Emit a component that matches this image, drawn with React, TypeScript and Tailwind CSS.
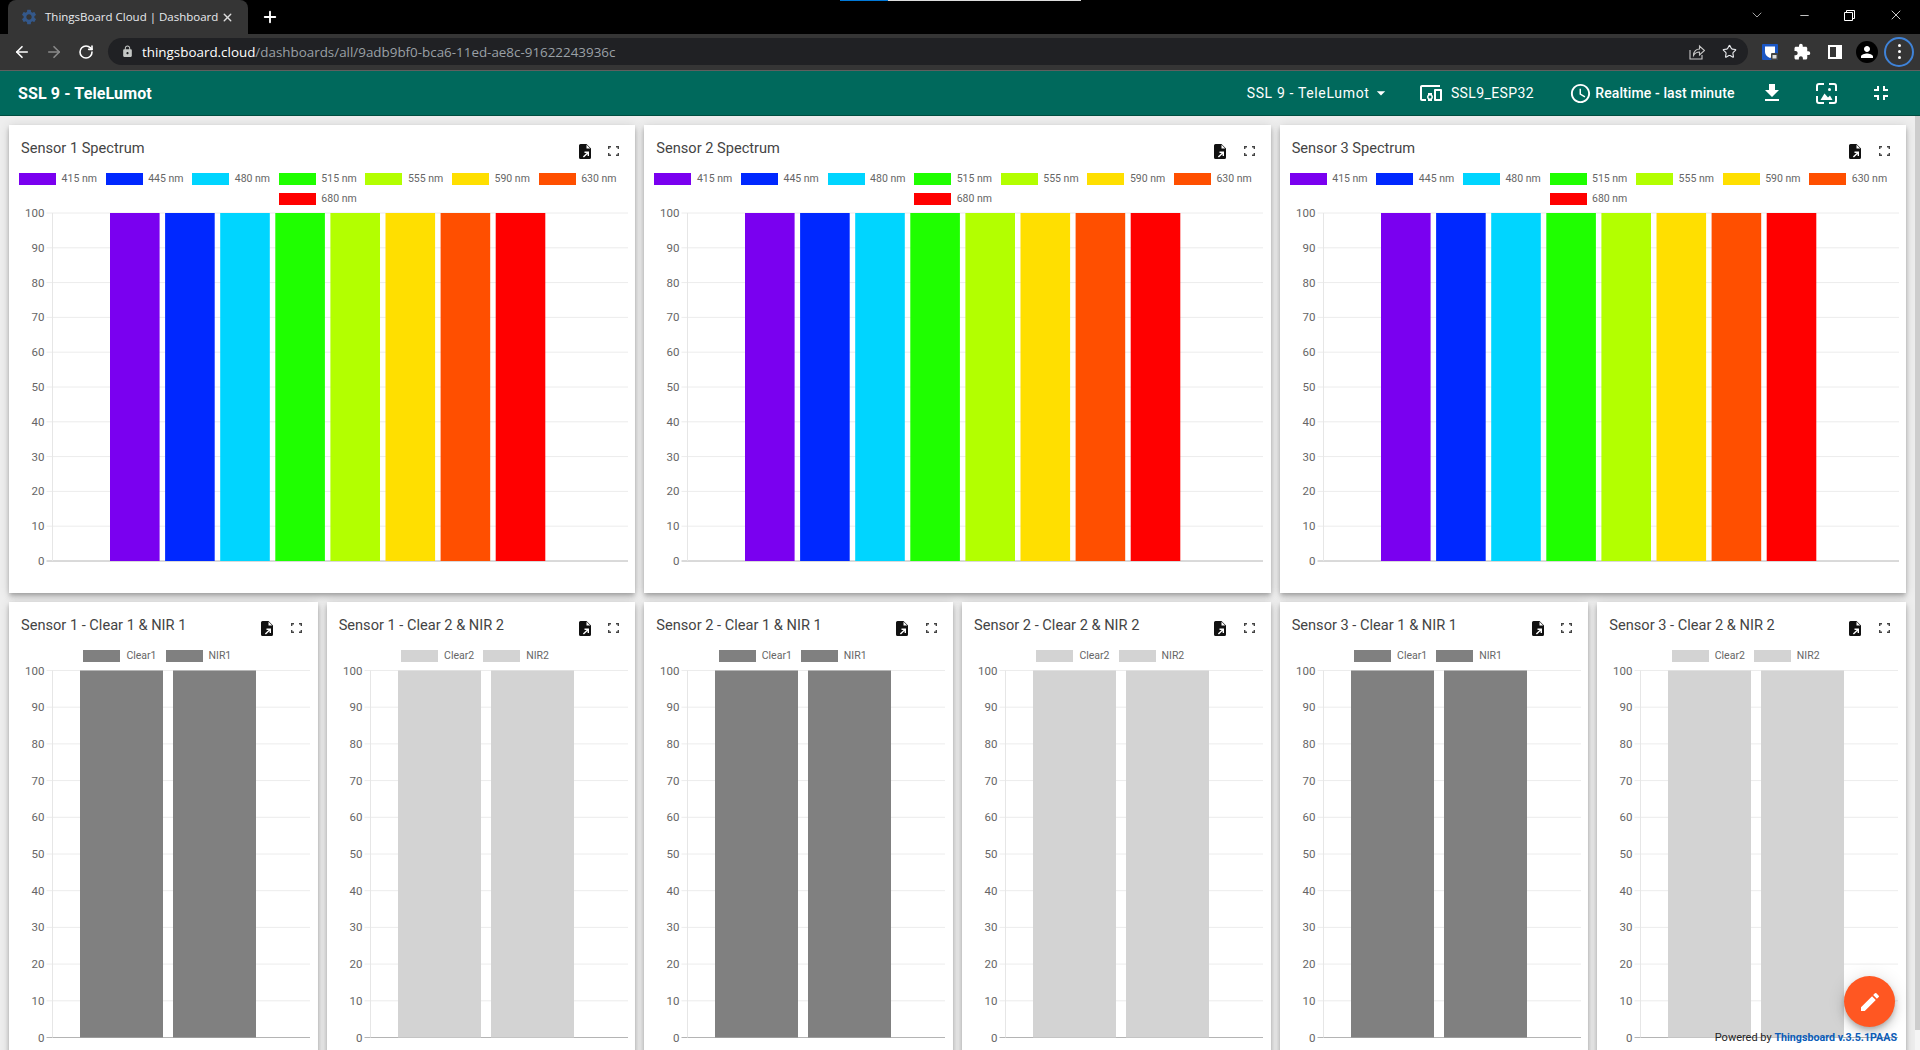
import { ArrowLeft, ArrowRight, ChevronDown, Minus, Plus, RotateCw, Star, X } from "lucide-react";
import {
  MdAccessTime,
  MdArrowDropDown,
  MdDevicesOther,
  MdEdit,
  MdExtension,
  MdFileDownload,
  MdFullscreenExit,
  MdLock,
  MdPerson,
  MdSettings,
} from "react-icons/md";

const SPECTRUM = [
  { label: "415 nm", color: "#7a00f0" },
  { label: "445 nm", color: "#0028ff" },
  { label: "480 nm", color: "#00d5ff" },
  { label: "515 nm", color: "#1fff00" },
  { label: "555 nm", color: "#b3ff00" },
  { label: "590 nm", color: "#ffdf00" },
  { label: "630 nm", color: "#ff4f00" },
  { label: "680 nm", color: "#ff0000" },
];

const TICKS = [100, 90, 80, 70, 60, 50, 40, 30, 20, 10, 0];

type Bar = { x: number; w: number; color: string };

function Chart({ width, height, top, right, step, bars }: { width: number; height: number; top: number; right: number; step: number; bars: Bar[] }) {
  const axis = 43.5;
  const bottom = top + step * 10;
  return (
    <svg width={width} height={height} className="block">
      {TICKS.map((tick, i) => (
        <g key={tick}>
          <line
            x1={axis - 6}
            x2={right}
            y1={top + i * step}
            y2={top + i * step}
            stroke={tick === 0 ? "#b4b4b4" : "#ececec"}
            strokeWidth={1}
          />
          <text x={axis - 8} y={top + i * step + 4} textAnchor="end" fontSize={11.5} fill="#666666" fontFamily="Roboto, sans-serif">
            {tick}
          </text>
        </g>
      ))}
      <line x1={axis} x2={axis} y1={top} y2={bottom} stroke="#e6e6e6" />
      {bars.map((bar) => (
        <rect key={bar.x} x={bar.x} y={top} width={bar.w} height={step * 10} fill={bar.color} />
      ))}
    </svg>
  );
}

function FileIcon() {
  return (
    <svg width="12" height="15" viewBox="0 0 12 15">
      <path d="M1.5 0H7.5L12 4.5V13.5A1.5 1.5 0 0 1 10.5 15H1.5A1.5 1.5 0 0 1 0 13.5V1.5A1.5 1.5 0 0 1 1.5 0Z" fill="#111111" />
      <path d="M7.5 0.8V4.5H11.2Z" fill="#ffffff" />
      <path d="M5.5 7.5H10V12H8.6V9.9L4.9 13.4L3.9 12.4L7.6 8.9H5.5Z" fill="#ffffff" />
    </svg>
  );
}

function ExpandIcon() {
  return (
    <svg width="11" height="10" viewBox="0 0 11 10" fill="none" stroke="#444444" strokeWidth="1.4">
      <path d="M0.7 3V0.7H3M8 0.7H10.3V3M0.7 7V9.3H3M8 9.3H10.3V7" />
    </svg>
  );
}

function CardHeader({ title }: { title: string }) {
  return (
    <div className="flex h-[48px] items-start justify-between pl-[12px] pr-[7px]">
      <span className="pt-[12.5px] text-[14.6px] leading-5 text-[#444444] font-['Roboto',sans-serif]">{title}</span>
      <div className="mt-4 flex h-5">
        <span className="flex w-[29px] items-center justify-center">
          <FileIcon />
        </span>
        <span className="flex w-[29px] items-center justify-center">
          <ExpandIcon />
        </span>
      </div>
    </div>
  );
}

const cardClass =
  "bg-white shadow-[0_2px_4px_-1px_rgba(0,0,0,0.2),0_4px_5px_0_rgba(0,0,0,0.14),0_1px_10px_0_rgba(0,0,0,0.12)]";

function SpectrumCard({ title }: { title: string }) {
  const bars = SPECTRUM.map((item, i) => ({ x: 101 + i * 55.1, w: 49.6, color: item.color }));
  return (
    <div className={`col-span-2 h-[468px] ${cardClass}`}>
      <CardHeader title={title} />
      <div className="flex flex-wrap justify-center gap-y-2">
        {SPECTRUM.map((item) => (
          <div key={item.label} className="flex h-3 w-[86.6px] items-center">
            <span className="h-3 w-[37px]" style={{ backgroundColor: item.color }} />
            <span className="ml-[5.5px] text-[10.5px] leading-3 text-[#666666] font-['Roboto',sans-serif]">{item.label}</span>
          </div>
        ))}
      </div>
      <Chart width={626} height={380} top={8} right={619} step={34.8} bars={bars} />
    </div>
  );
}

function ClearCard({ title, labels, color }: { title: string; labels: string[]; color: string }) {
  const bars = [
    { x: 71, w: 83, color },
    { x: 164, w: 83, color },
  ];
  return (
    <div className={`h-[470px] ${cardClass}`}>
      <CardHeader title={title} />
      <div className="flex justify-center pr-[3px]">
        {labels.map((label) => (
          <div key={label} className="mr-[9px] flex h-3 items-center">
            <span className="h-3 w-[37px]" style={{ backgroundColor: color }} />
            <span className="ml-[6px] text-[10.5px] leading-3 text-[#666666] font-['Roboto',sans-serif]">{label}</span>
          </div>
        ))}
      </div>
      <Chart width={308} height={400} top={8.5} right={301} step={36.7} bars={bars} />
    </div>
  );
}

function BrowserChrome() {
  return (
    <div className="font-['Open_Sans',sans-serif]">
      <div className="relative flex h-[34px] items-end bg-black text-white">
        <div className="absolute left-[840px] top-0 h-px w-[48px] bg-[#0078d7]" />
        <div className="absolute left-[888px] top-0 h-px w-[193px] bg-[#dddddd]" />
        <div className="ml-2 flex h-[34px] w-[240px] items-center rounded-t-lg bg-[#353535] pl-3">
          <MdSettings size={18} className="shrink-0 text-[#34588a]" />
          <span className="ml-[7px] w-[176px] whitespace-nowrap text-[11.5px] leading-4 text-[#e8eaed]">ThingsBoard Cloud | Dashboard</span>
          <X size={13} strokeWidth={2.5} className="shrink-0 text-[#dddddd]" />
        </div>
        <Plus size={18} strokeWidth={2.5} className="mb-2 ml-[13px]" />
        <div className="ml-auto flex h-[30px] items-center self-start">
          <ChevronDown size={16} strokeWidth={1.2} className="mr-[33px] text-[#cccccc]" />
          <Minus size={13} strokeWidth={1.4} className="mr-[33px]" />
          <svg width="11" height="11" viewBox="0 0 11 11" fill="none" stroke="#ffffff" className="mr-[33px]">
            <path d="M0.5 2.5H8.5V10.5H0.5Z" />
            <path d="M2.5 2.5V0.5H10.5V8.5H8.5" />
          </svg>
          <X size={16} strokeWidth={1.2} className="mr-4" />
        </div>
      </div>
      <div className="flex h-[36px] items-center border-b-0 bg-[#353535] pb-[1px]">
        <ArrowLeft size={18} strokeWidth={2.2} className="ml-[13px] text-white" />
        <ArrowRight size={18} strokeWidth={2.2} className="ml-[14px] text-[#8a8a8a]" />
        <RotateCw size={16} strokeWidth={2.4} className="ml-[15px] text-white" />
        <div className="ml-[14px] flex h-[27px] w-[1640px] items-center rounded-full bg-[#202124] pl-[13px]">
          <MdLock size={13} className="text-[#c4c7c5]" />
          <span className="ml-2 text-[13.4px] leading-5 text-white">thingsboard.cloud</span>
          <span className="text-[13.4px] leading-5 text-[#9aa0a6]">/dashboards/all/9adb9bf0-bca6-11ed-ae8c-91622243936c</span>
          <svg width="16" height="16" viewBox="0 0 16 16" fill="none" stroke="#c8c8c8" strokeWidth="1.1" className="ml-auto">
            <path d="M1 6V15H13V11" />
            <path d="M4.5 11.5C4.5 7 7.5 5 10.5 5V2L15.5 6.5L10.5 11V8C8 8 6 9 4.5 11.5Z" />
          </svg>
          <Star size={15} strokeWidth={1.8} className="ml-[17px] mr-[11px] text-[#e8eaed]" />
        </div>
        <svg width="16" height="16" viewBox="0 0 16 16" className="ml-[14px]">
          <rect width="16" height="16" rx="1" fill="#1a56c4" />
          <path d="M3 2.5H13V8C13 11 10.5 13 8 14C5.5 13 3 11 3 8Z" fill="#ffffff" />
          <rect x="9" y="9" width="7" height="7" rx="1" fill="#444444" />
          <rect x="10.5" y="11" width="4" height="3.5" fill="#dddddd" />
        </svg>
        <MdExtension size={18} className="ml-[15px] text-white" />
        <svg width="14" height="14" viewBox="0 0 14 14" className="ml-[17px]">
          <path d="M0 0H14V14H0Z M2 2V12H8V2Z" fill="#ffffff" fillRule="evenodd" />
        </svg>
        <span className="ml-[14px] flex h-[22px] w-[22px] items-center justify-center rounded-full bg-black">
          <MdPerson size={18} className="text-white" />
        </span>
        <span className="ml-[6px] flex h-[30px] w-[30px] flex-col items-center justify-center gap-[3px] rounded-full border-2 border-[#3f83d8]">
          <span className="h-[3px] w-[3px] rounded-full bg-white" />
          <span className="h-[3px] w-[3px] rounded-full bg-white" />
          <span className="h-[3px] w-[3px] rounded-full bg-white" />
        </span>
      </div>
      <div className="h-px bg-[#5f5f5f]" />
    </div>
  );
}

function DashboardBar() {
  return (
    <div className="flex h-[45px] items-center border-b border-[#004d40] bg-[#00695c] text-white font-['Roboto',sans-serif]">
      <h1 className="ml-[18px] mt-px text-[16px] font-bold tracking-[0.12px]">SSL 9 - TeleLumot</h1>
      <div className="ml-auto flex items-center">
        <span className="text-[14px] font-normal tracking-[0.65px]">SSL 9 - TeleLumot</span>
        <MdArrowDropDown size={20} className="ml-[1px]" />
        <MdDevicesOther size={24} className="ml-[28.4px]" />
        <span className="ml-[8px] text-[14px] font-normal tracking-[0.4px]">SSL9_ESP32</span>
        <MdAccessTime size={23} className="ml-[35px]" />
        <span className="ml-[3.2px] text-[14px] font-medium tracking-[0.1px]">Realtime - last minute</span>
        <MdFileDownload size={24} className="ml-[25.5px]" />
        <svg width="21" height="21" viewBox="0 0 21 21" fill="none" stroke="#ffffff" strokeWidth="2" className="ml-[32px]">
          <path d="M8 1H3A2 2 0 0 0 1 3V8M13 1H18A2 2 0 0 1 20 3V8M1 13V18A2 2 0 0 0 3 20H8M20 13V18A2 2 0 0 1 18 20H13" />
          <path d="M4.5 17L8.5 10.5L12 14.5L14 12.5L16.5 17Z" fill="#ffffff" stroke="none" />
          <circle cx="13.5" cy="6.5" r="1.5" fill="#ffffff" stroke="none" />
        </svg>
        <MdFullscreenExit size={24} className="ml-[32px] mr-[27px]" />
      </div>
    </div>
  );
}

export default function App() {
  return (
    <div className="relative flex h-[1050px] w-[1920px] flex-col overflow-hidden bg-[#eeeeee]">
      <BrowserChrome />
      <DashboardBar />
      <div className="flex min-h-0 flex-1 justify-between">
        <div className="ml-[9px] mt-[9px] grid h-fit w-[1897px] grid-cols-6 gap-[9px]">
          <SpectrumCard title="Sensor 1 Spectrum" />
          <SpectrumCard title="Sensor 2 Spectrum" />
          <SpectrumCard title="Sensor 3 Spectrum" />
          <ClearCard title="Sensor 1 - Clear 1 & NIR 1" labels={["Clear1", "NIR1"]} color="#808080" />
          <ClearCard title="Sensor 1 - Clear 2 & NIR 2" labels={["Clear2", "NIR2"]} color="#d3d3d3" />
          <ClearCard title="Sensor 2 - Clear 1 & NIR 1" labels={["Clear1", "NIR1"]} color="#808080" />
          <ClearCard title="Sensor 2 - Clear 2 & NIR 2" labels={["Clear2", "NIR2"]} color="#d3d3d3" />
          <ClearCard title="Sensor 3 - Clear 1 & NIR 1" labels={["Clear1", "NIR1"]} color="#808080" />
          <ClearCard title="Sensor 3 - Clear 2 & NIR 2" labels={["Clear2", "NIR2"]} color="#d3d3d3" />
        </div>
        <div className="flex w-[5px] flex-col bg-[#f5f5f5]">
          <div className="h-[914px] bg-[#cdcdcd]" />
        </div>
      </div>
      <button className="absolute left-[1844px] top-[976px] flex h-[51px] w-[51px] items-center justify-center rounded-full bg-[#ff5722] text-white shadow-[0_3px_5px_-1px_rgba(0,0,0,0.2),0_6px_10px_0_rgba(0,0,0,0.14),0_1px_18px_0_rgba(0,0,0,0.12)]">
        <MdEdit size={24} />
      </button>
      <div className="absolute right-[23px] top-[1031px] text-[11px] leading-[14px] text-[#222222] font-['Roboto',sans-serif]">
        Powered by <span className="text-[10.7px] font-bold text-[#0b5cb8]">Thingsboard v.3.5.1PAAS</span>
      </div>
    </div>
  );
}
